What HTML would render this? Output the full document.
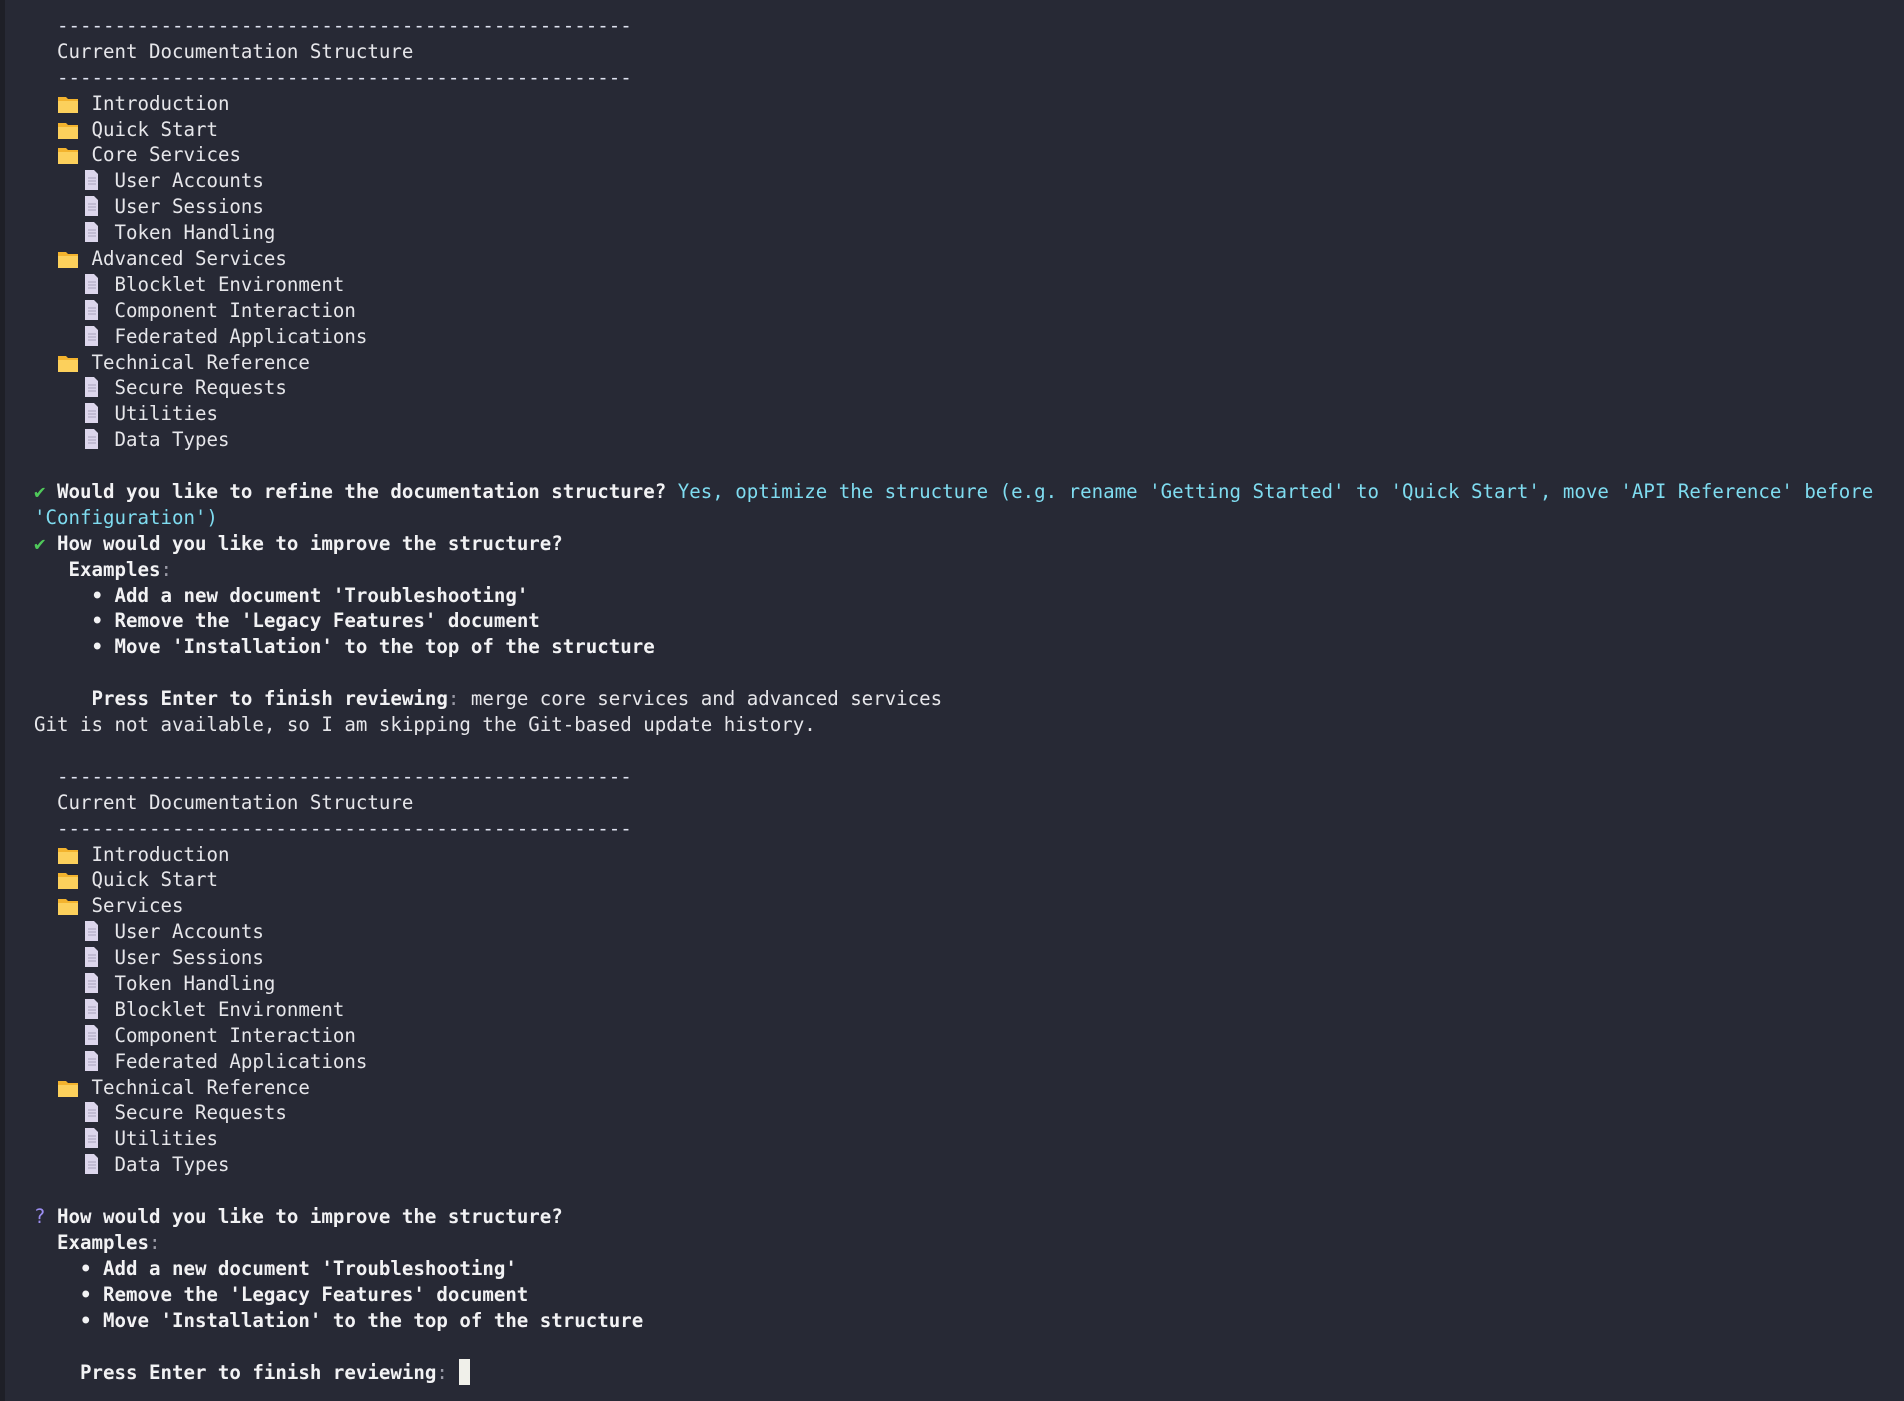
<!DOCTYPE html>
<html><head><meta charset="utf-8"><style>
html,body{margin:0;padding:0;}
body{width:1904px;height:1401px;background:#272935;overflow:hidden;position:relative;
font-family:"DejaVu Sans Mono","Liberation Mono",monospace;font-size:19.1px;color:#e6e6ea;}
.strip{position:absolute;left:0;top:0;width:5px;height:1401px;background:#1e1f27;}
.t{position:absolute;left:34px;top:13px;}
.l{height:25.9px;line-height:25.9px;white-space:pre;}
b{font-weight:bold;color:#f2f2f4;}
.c{color:#7fdcf0;}
.g{color:#4fc95a;}
.q{color:#9b8df0;}
.d{color:#9a9aa6;}
.dash{color:#dfe2f0;}
.ic{display:inline-block;width:23px;height:20px;vertical-align:-4px;position:relative;}
.cur{display:inline-block;width:11px;height:26px;background:#f0f0ea;vertical-align:-6px;}
</style></head><body>
<div class="strip"></div>
<div class="t">
<div class="l dash">  --------------------------------------------------</div>
<div class="l">  Current Documentation Structure</div>
<div class="l dash">  --------------------------------------------------</div>
<div class="l">  <span class="ic"><svg width="23" height="20" viewBox="0 0 23 20"><path d="M1 3h8l2 2h10v14H1z" fill="#f3b32e"/><path d="M1 7h20v12H1z" fill="#fcd05c"/></svg></span> Introduction</div>
<div class="l">  <span class="ic"><svg width="23" height="20" viewBox="0 0 23 20"><path d="M1 3h8l2 2h10v14H1z" fill="#f3b32e"/><path d="M1 7h20v12H1z" fill="#fcd05c"/></svg></span> Quick Start</div>
<div class="l">  <span class="ic"><svg width="23" height="20" viewBox="0 0 23 20"><path d="M1 3h8l2 2h10v14H1z" fill="#f3b32e"/><path d="M1 7h20v12H1z" fill="#fcd05c"/></svg></span> Core Services</div>
<div class="l">    <span class="ic"><svg width="20" height="22" viewBox="0 0 20 22"><path d="M5 1h9l4 4v16H5z" fill="#dcd6ec"/><path d="M8 9h8M8 12h8M8 15h8" stroke="#a8a2bc" stroke-width="1"/></svg></span> User Accounts</div>
<div class="l">    <span class="ic"><svg width="20" height="22" viewBox="0 0 20 22"><path d="M5 1h9l4 4v16H5z" fill="#dcd6ec"/><path d="M8 9h8M8 12h8M8 15h8" stroke="#a8a2bc" stroke-width="1"/></svg></span> User Sessions</div>
<div class="l">    <span class="ic"><svg width="20" height="22" viewBox="0 0 20 22"><path d="M5 1h9l4 4v16H5z" fill="#dcd6ec"/><path d="M8 9h8M8 12h8M8 15h8" stroke="#a8a2bc" stroke-width="1"/></svg></span> Token Handling</div>
<div class="l">  <span class="ic"><svg width="23" height="20" viewBox="0 0 23 20"><path d="M1 3h8l2 2h10v14H1z" fill="#f3b32e"/><path d="M1 7h20v12H1z" fill="#fcd05c"/></svg></span> Advanced Services</div>
<div class="l">    <span class="ic"><svg width="20" height="22" viewBox="0 0 20 22"><path d="M5 1h9l4 4v16H5z" fill="#dcd6ec"/><path d="M8 9h8M8 12h8M8 15h8" stroke="#a8a2bc" stroke-width="1"/></svg></span> Blocklet Environment</div>
<div class="l">    <span class="ic"><svg width="20" height="22" viewBox="0 0 20 22"><path d="M5 1h9l4 4v16H5z" fill="#dcd6ec"/><path d="M8 9h8M8 12h8M8 15h8" stroke="#a8a2bc" stroke-width="1"/></svg></span> Component Interaction</div>
<div class="l">    <span class="ic"><svg width="20" height="22" viewBox="0 0 20 22"><path d="M5 1h9l4 4v16H5z" fill="#dcd6ec"/><path d="M8 9h8M8 12h8M8 15h8" stroke="#a8a2bc" stroke-width="1"/></svg></span> Federated Applications</div>
<div class="l">  <span class="ic"><svg width="23" height="20" viewBox="0 0 23 20"><path d="M1 3h8l2 2h10v14H1z" fill="#f3b32e"/><path d="M1 7h20v12H1z" fill="#fcd05c"/></svg></span> Technical Reference</div>
<div class="l">    <span class="ic"><svg width="20" height="22" viewBox="0 0 20 22"><path d="M5 1h9l4 4v16H5z" fill="#dcd6ec"/><path d="M8 9h8M8 12h8M8 15h8" stroke="#a8a2bc" stroke-width="1"/></svg></span> Secure Requests</div>
<div class="l">    <span class="ic"><svg width="20" height="22" viewBox="0 0 20 22"><path d="M5 1h9l4 4v16H5z" fill="#dcd6ec"/><path d="M8 9h8M8 12h8M8 15h8" stroke="#a8a2bc" stroke-width="1"/></svg></span> Utilities</div>
<div class="l">    <span class="ic"><svg width="20" height="22" viewBox="0 0 20 22"><path d="M5 1h9l4 4v16H5z" fill="#dcd6ec"/><path d="M8 9h8M8 12h8M8 15h8" stroke="#a8a2bc" stroke-width="1"/></svg></span> Data Types</div>
<div class="l"> </div>
<div class="l"><span class="g">✔</span> <b>Would you like to refine the documentation structure?</b> <span class="c">Yes, optimize the structure (e.g. rename 'Getting Started' to 'Quick Start', move 'API Reference' before</span></div>
<div class="l c">'Configuration')</div>
<div class="l"><span class="g">✔</span> <b>How would you like to improve the structure?</b></div>
<div class="l">   <b>Examples</b><span class="d">:</span></div>
<div class="l">     <b>• Add a new document 'Troubleshooting'</b></div>
<div class="l">     <b>• Remove the 'Legacy Features' document</b></div>
<div class="l">     <b>• Move 'Installation' to the top of the structure</b></div>
<div class="l"> </div>
<div class="l">     <b>Press Enter to finish reviewing</b><span class="d">:</span> merge core services and advanced services</div>
<div class="l">Git is not available, so I am skipping the Git-based update history.</div>
<div class="l"> </div>
<div class="l dash">  --------------------------------------------------</div>
<div class="l">  Current Documentation Structure</div>
<div class="l dash">  --------------------------------------------------</div>
<div class="l">  <span class="ic"><svg width="23" height="20" viewBox="0 0 23 20"><path d="M1 3h8l2 2h10v14H1z" fill="#f3b32e"/><path d="M1 7h20v12H1z" fill="#fcd05c"/></svg></span> Introduction</div>
<div class="l">  <span class="ic"><svg width="23" height="20" viewBox="0 0 23 20"><path d="M1 3h8l2 2h10v14H1z" fill="#f3b32e"/><path d="M1 7h20v12H1z" fill="#fcd05c"/></svg></span> Quick Start</div>
<div class="l">  <span class="ic"><svg width="23" height="20" viewBox="0 0 23 20"><path d="M1 3h8l2 2h10v14H1z" fill="#f3b32e"/><path d="M1 7h20v12H1z" fill="#fcd05c"/></svg></span> Services</div>
<div class="l">    <span class="ic"><svg width="20" height="22" viewBox="0 0 20 22"><path d="M5 1h9l4 4v16H5z" fill="#dcd6ec"/><path d="M8 9h8M8 12h8M8 15h8" stroke="#a8a2bc" stroke-width="1"/></svg></span> User Accounts</div>
<div class="l">    <span class="ic"><svg width="20" height="22" viewBox="0 0 20 22"><path d="M5 1h9l4 4v16H5z" fill="#dcd6ec"/><path d="M8 9h8M8 12h8M8 15h8" stroke="#a8a2bc" stroke-width="1"/></svg></span> User Sessions</div>
<div class="l">    <span class="ic"><svg width="20" height="22" viewBox="0 0 20 22"><path d="M5 1h9l4 4v16H5z" fill="#dcd6ec"/><path d="M8 9h8M8 12h8M8 15h8" stroke="#a8a2bc" stroke-width="1"/></svg></span> Token Handling</div>
<div class="l">    <span class="ic"><svg width="20" height="22" viewBox="0 0 20 22"><path d="M5 1h9l4 4v16H5z" fill="#dcd6ec"/><path d="M8 9h8M8 12h8M8 15h8" stroke="#a8a2bc" stroke-width="1"/></svg></span> Blocklet Environment</div>
<div class="l">    <span class="ic"><svg width="20" height="22" viewBox="0 0 20 22"><path d="M5 1h9l4 4v16H5z" fill="#dcd6ec"/><path d="M8 9h8M8 12h8M8 15h8" stroke="#a8a2bc" stroke-width="1"/></svg></span> Component Interaction</div>
<div class="l">    <span class="ic"><svg width="20" height="22" viewBox="0 0 20 22"><path d="M5 1h9l4 4v16H5z" fill="#dcd6ec"/><path d="M8 9h8M8 12h8M8 15h8" stroke="#a8a2bc" stroke-width="1"/></svg></span> Federated Applications</div>
<div class="l">  <span class="ic"><svg width="23" height="20" viewBox="0 0 23 20"><path d="M1 3h8l2 2h10v14H1z" fill="#f3b32e"/><path d="M1 7h20v12H1z" fill="#fcd05c"/></svg></span> Technical Reference</div>
<div class="l">    <span class="ic"><svg width="20" height="22" viewBox="0 0 20 22"><path d="M5 1h9l4 4v16H5z" fill="#dcd6ec"/><path d="M8 9h8M8 12h8M8 15h8" stroke="#a8a2bc" stroke-width="1"/></svg></span> Secure Requests</div>
<div class="l">    <span class="ic"><svg width="20" height="22" viewBox="0 0 20 22"><path d="M5 1h9l4 4v16H5z" fill="#dcd6ec"/><path d="M8 9h8M8 12h8M8 15h8" stroke="#a8a2bc" stroke-width="1"/></svg></span> Utilities</div>
<div class="l">    <span class="ic"><svg width="20" height="22" viewBox="0 0 20 22"><path d="M5 1h9l4 4v16H5z" fill="#dcd6ec"/><path d="M8 9h8M8 12h8M8 15h8" stroke="#a8a2bc" stroke-width="1"/></svg></span> Data Types</div>
<div class="l"> </div>
<div class="l"><span class="q">?</span> <b>How would you like to improve the structure?</b></div>
<div class="l">  <b>Examples</b><span class="d">:</span></div>
<div class="l">    <b>• Add a new document 'Troubleshooting'</b></div>
<div class="l">    <b>• Remove the 'Legacy Features' document</b></div>
<div class="l">    <b>• Move 'Installation' to the top of the structure</b></div>
<div class="l"> </div>
<div class="l">    <b>Press Enter to finish reviewing</b><span class="d">:</span> <span class="cur"></span></div>
</div>
</body></html>
